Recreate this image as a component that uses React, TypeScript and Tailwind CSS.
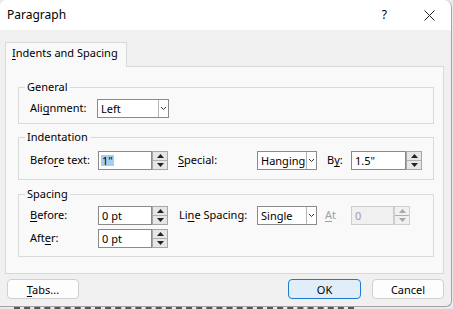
import React from 'react';

const font = { fontFamily: '"Noto Sans", "Open Sans", sans-serif' };

function Acc({ text, at }: { text: string; at: number }) {
  // underline the access key letter, as Windows dialogs do
  return (
    <span>
      {text.slice(0, at)}
      <span className="underline underline-offset-2">{text[at]}</span>
      {text.slice(at + 1)}
    </span>
  );
}

function Chevron({ color = '#333' }: { color?: string }) {
  return (
    <svg width="7" height="5" viewBox="0 0 7 5">
      <path d="M1 1l2.5 2.5L6 1" fill="none" stroke={color} strokeWidth="1" />
    </svg>
  );
}

function Select({ value, width }: { value: string; width: string }) {
  return (
    <div className={`flex h-[19px] items-stretch border border-[#8a8a8a] bg-white ${width}`}>
      <div className="flex flex-1 items-center pl-[3px] leading-none">{value}</div>
      <div className="flex w-[10px] items-center justify-center border-l border-[#b5b5b5]">
        <Chevron />
      </div>
    </div>
  );
}

function Spinner({ disabled }: { disabled?: boolean }) {
  const c = disabled ? '#a8a8a8' : '#222';
  return (
    <div
      className={`flex w-[16px] flex-col border ${
        disabled ? 'border-[#cfcfcf] bg-[#f0f0f0]' : 'border-[#a6a6a6] bg-[#e6e6e6]'
      }`}
    >
      <div className="flex flex-1 items-center justify-center border-b border-[#b0b0b0]">
        <svg width="7" height="4" viewBox="0 0 7 4">
          <path d="M0 4L3.5 0L7 4Z" fill={c} />
        </svg>
      </div>
      <div className="flex flex-1 items-center justify-center">
        <svg width="7" height="4" viewBox="0 0 7 4">
          <path d="M0 0L3.5 4L7 0Z" fill={c} />
        </svg>
      </div>
    </div>
  );
}

function SpinInput({
  value,
  width,
  selected,
  disabled,
}: {
  value: string;
  width: string;
  selected?: boolean;
  disabled?: boolean;
}) {
  return (
    <div className={`flex h-[19px] items-stretch ${width}`}>
      <div
        className={`flex flex-1 items-center border pl-[2px] leading-none ${
          disabled ? 'border-[#cccccc] bg-[#f0f0f0] text-[#a0a0a0]' : 'border-[#8a8a8a] bg-white'
        }`}
      >
        <span className={selected ? 'bg-[#a9cdf0] px-[1px]' : 'px-[1px]'}>{value}</span>
      </div>
      <Spinner disabled={disabled} />
    </div>
  );
}

function Group({ title, children, className = '' }: { title: string; children: React.ReactNode; className?: string }) {
  return (
    <fieldset className={`border border-[#dadada] pl-[11px] ${className}`}>
      <legend className="-ml-[5px] px-[2px] leading-[16px]">{title}</legend>
      {children}
    </fieldset>
  );
}

function Button({ children, primary, className = '' }: { children: React.ReactNode; primary?: boolean; className?: string }) {
  return (
    <div
      className={`flex h-[20px] items-center justify-center rounded-[4px] border leading-none ${
        primary ? 'border-[#1c7bd1] bg-[#e1edf8]' : 'border-[#cfcfcf] bg-[#fdfdfd]'
      } ${className}`}
    >
      {children}
    </div>
  );
}

export default function App() {
  return (
    <div className="h-[309px] w-[453px] overflow-hidden whitespace-nowrap bg-[#e9e9e9] text-[11px] text-black" style={font}>
      <div className="flex h-[307px] w-[452px] flex-col overflow-hidden rounded-tl-[6px] rounded-tr-[8px] rounded-br-[6px] border-r border-b border-[#a3a3a3] bg-[#f0f0f0]">
        {/* Title bar */}
        <div className="flex h-[30px] items-center bg-white pl-[7px]">
          <span className="-mt-px text-[12px]">Paragraph</span>
          <span className="ml-auto mr-[37px] text-[12px]">?</span>
          <svg width="11" height="11" viewBox="0 0 11 11" className="mr-[16px]">
            <path d="M0.5 0.5l10 10M10.5 0.5l-10 10" stroke="#222" strokeWidth="1" />
          </svg>
        </div>

        {/* Tab */}
        <div className="mt-[12px] ml-[5px] relative z-10 -mb-px h-[25px] w-[122px] border border-b-0 border-[#d9d9d9] bg-[#f9f9f9] px-[6px] pt-[2px] leading-[16px]">
          <Acc text="Indents and Spacing" at={0} />
        </div>

        {/* Panel */}
        <div className="ml-[5px] h-[208px] w-[439px] border border-[#d9d9d9] bg-[#f9f9f9] pt-[12px] pl-[12px]">
          <Group title="General" className="w-[416px] pb-[5px]">
            <div className="mt-[4px] flex items-center">
              <span className="w-[67px]">
                <Acc text="Alignment:" at={3} />
              </span>
              <Select value="Left" width="w-[72px]" />
            </div>
          </Group>

          <Group title="Indentation" className="mt-[5px] w-[416px] pb-[9px]">
            <div className="mt-[6px] flex items-center">
              <span className="w-[68px]">
                <Acc text="Before text:" at={4} />
              </span>
              <SpinInput value={'1"'} width="w-[70px]" selected />
              <span className="ml-[10px] w-[79px]">
                <Acc text="Special:" at={0} />
              </span>
              <Select value="Hanging" width="w-[60px]" />
              <span className="ml-[10px] w-[24px]">
                <Acc text="By:" at={1} />
              </span>
              <SpinInput value={'1.5"'} width="w-[71px]" />
            </div>
          </Group>

          <Group title="Spacing" className="mt-[6px] w-[416px] pb-[8px]">
            <div className="mt-[4px] flex items-center">
              <span className="w-[68px]">
                <Acc text="Before:" at={0} />
              </span>
              <SpinInput value="0 pt" width="w-[70px]" />
              <span className="ml-[11px] w-[78px]">
                <Acc text="Line Spacing:" at={2} />
              </span>
              <Select value="Single" width="w-[60px]" />
              <span className="ml-[8px] w-[26px] text-[#a0a0a0]">
                <Acc text="At" at={0} />
              </span>
              <SpinInput value="0" width="w-[59px]" disabled />
            </div>
            <div className="mt-[4px] flex items-center">
              <span className="w-[68px]">
                <Acc text="After:" at={3} />
              </span>
              <SpinInput value="0 pt" width="w-[70px]" />
            </div>
          </Group>
        </div>

        {/* Buttons */}
        <div className="mt-[5px] flex pl-[7px] pr-[7px]">
          <Button className="w-[72px]">
            <Acc text="Tabs..." at={0} />
          </Button>
          <Button primary className="ml-auto w-[73px]">
            OK
          </Button>
          <Button className="ml-[11px] w-[72px]">Cancel</Button>
        </div>
      </div>
      {/* document text peeking below the dialog */}
      <div className="ml-[14px] w-[340px] border-t-2 border-dashed border-[#555]" />
    </div>
  );
}
